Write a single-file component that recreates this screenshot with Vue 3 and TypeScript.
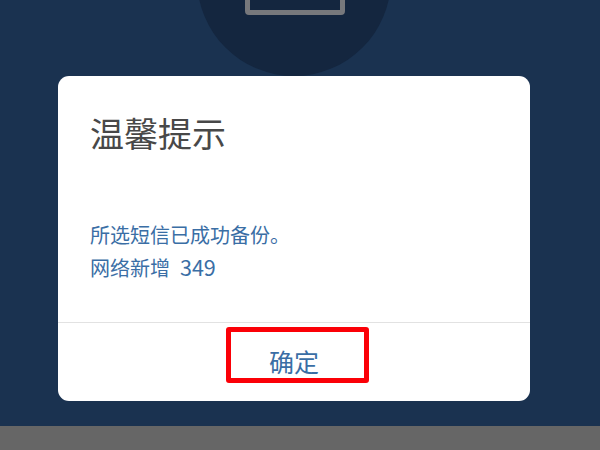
<script setup lang="ts">
const title: string = '温馨提示'
const messageText: string = '所选短信已成功备份。'
const addedLabel: string = '网络新增'
const addedCount: number = 349
</script>

<template>
  <div class="page">
    <main class="stage">
      <div class="badge" aria-hidden="true"><div class="device"></div></div>
      <section class="card">
        <div class="content">
          <h1 class="title">{{ title }}</h1>
          <div class="message">
            <p>{{ messageText }}</p>
            <p class="added">
              <span>{{ addedLabel }}</span>
              <span class="count">{{ addedCount }}</span>
            </p>
          </div>
        </div>
        <footer class="actions">
          <span class="confirm">确定</span>
          <span class="mark"></span>
        </footer>
      </section>
    </main>
    <div class="strip"></div>
  </div>
</template>

<style>
html, body { margin: 0; background: #666666; }
</style>

<style scoped>
.page {
  width: 600px;
  height: 450px;
  display: flex;
  flex-direction: column;
  overflow: hidden;
  font-family: "Noto Sans CJK SC", "Liberation Sans", sans-serif;
}
.stage {
  position: relative;
  height: 426px;
  box-sizing: border-box;
  padding: 76px 70px 0 58px;
  background: #1a3250;
}
.strip {
  flex: 1;
  background: #666666;
}
.badge {
  position: absolute;
  left: 197px;
  top: -118px;
  width: 194px;
  height: 194px;
  border-radius: 50%;
  background: #14263f;
}
.device {
  position: absolute;
  left: 48px;
  top: 93px;
  width: 100px;
  height: 40px;
  box-sizing: border-box;
  border: 5px solid #77787c;
  border-radius: 4px;
}
.card {
  position: relative;
  height: 325px;
  display: flex;
  flex-direction: column;
  background: #ffffff;
  border-radius: 11px;
}
.content {
  flex: 1;
  box-sizing: border-box;
  padding: 37px 32px 0;
  border-bottom: 1px solid #e2e2e2;
}
.title {
  margin: 0;
  font-size: 34px;
  line-height: 40px;
  font-weight: 400;
  color: #484848;
}
.message {
  margin-top: 66px;
  font-size: 20px;
  line-height: 32px;
  color: #3a6ea5;
}
.message p {
  margin: 0;
}
.added {
  display: flex;
  align-items: baseline;
  gap: 10px;
}
.count {
  font-size: 21.5px;
}
.actions {
  position: relative;
  height: 78px;
  display: flex;
  justify-content: center;
  align-items: center;
}
.confirm {
  font-size: 25px;
  line-height: 30px;
  margin-top: -2px;
  color: #3a6ea5;
}
.mark {
  position: absolute;
  left: 168px;
  top: 4px;
  width: 143px;
  height: 56px;
  box-sizing: border-box;
  border: 5px solid #fb0007;
  border-radius: 3px;
}
</style>
